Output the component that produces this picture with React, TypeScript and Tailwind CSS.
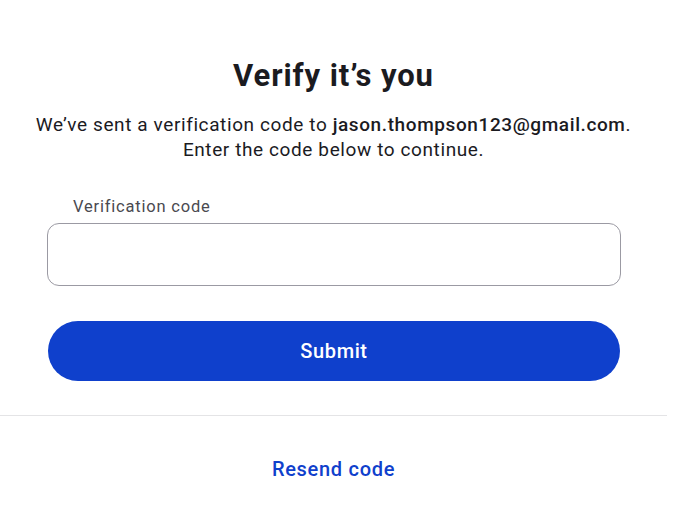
export default function App() {
  return (
    <div className="min-h-[512px] w-[684px] bg-white font-['Roboto',sans-serif] text-[#1b1b1f]">
      <div className="w-[667px]">
        <div className="flex flex-col items-center px-[20px] pt-[56px]">
          <h1 className="text-[31px] font-bold leading-[40px] tracking-[0.9px]">Verify it’s you</h1>
          <p className="mt-[16px] text-center text-[19px] leading-[25px] tracking-[0.6px] text-[#1b1b1f]">
            We’ve sent a verification code to <span className="font-medium">jason.thompson123@gmail.com</span>.
            <br />
            Enter the code below to continue.
          </p>
        </div>
        <div className="px-[47px] pt-[34px]">
          <label className="block pl-[26px] text-[16.5px] leading-[22px] tracking-[0.8px] text-[#4a4a50]">
            Verification code
          </label>
          <input
            type="text"
            className="mt-[5px] h-[63px] w-[574px] rounded-[12px] border border-[#9b9aa3] px-4 text-[17px] outline-none"
          />
          <button className="mt-[35px] ml-px h-[60px] w-[572px] rounded-full bg-[#0f40cc] text-[20px] font-medium tracking-[0.6px] text-white">
            Submit
          </button>
        </div>
        <div className="mt-[34px] border-t border-[#e4e4e6]" />
        <div className="flex justify-center pt-[38px]">
          <button className="text-[20px] font-medium tracking-[0.7px] text-[#0f40cc]">Resend code</button>
        </div>
      </div>
    </div>
  );
}
